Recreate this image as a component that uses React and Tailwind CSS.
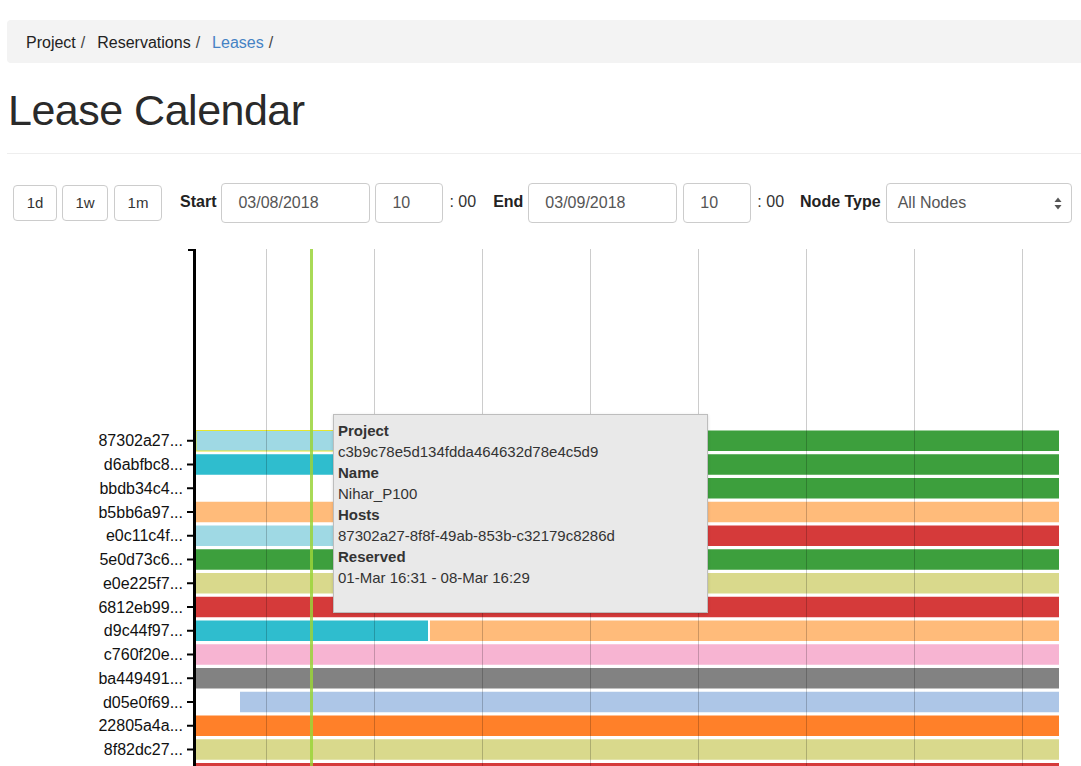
import React from "react";

const rows = [
  { id: "87302a27...", bars: [{ x1: 196, x2: 560, c: "#9fd9e4", hl: true }, { x1: 560, x2: 1059, c: "#3d9f3d" }] },
  { id: "d6abfbc8...", bars: [{ x1: 196, x2: 560, c: "#2fbdce" }, { x1: 560, x2: 1059, c: "#3d9f3d" }] },
  { id: "bbdb34c4...", bars: [{ x1: 560, x2: 1059, c: "#3d9f3d" }] },
  { id: "b5bb6a97...", bars: [{ x1: 196, x2: 1059, c: "#ffbb7a" }] },
  { id: "e0c11c4f...", bars: [{ x1: 196, x2: 560, c: "#9fd9e4" }, { x1: 560, x2: 1059, c: "#d53a3a" }] },
  { id: "5e0d73c6...", bars: [{ x1: 196, x2: 1059, c: "#3d9f3d" }] },
  { id: "e0e225f7...", bars: [{ x1: 196, x2: 1059, c: "#d9d98c" }] },
  { id: "6812eb99...", bars: [{ x1: 196, x2: 1059, c: "#d53a3a" }] },
  { id: "d9c44f97...", bars: [{ x1: 196, x2: 428, c: "#2fbdce" }, { x1: 430, x2: 1059, c: "#ffbb7a" }] },
  { id: "c760f20e...", bars: [{ x1: 196, x2: 1059, c: "#f7b4d2" }] },
  { id: "ba449491...", bars: [{ x1: 196, x2: 1059, c: "#828282" }] },
  { id: "d05e0f69...", bars: [{ x1: 240, x2: 1059, c: "#adc6e7" }] },
  { id: "22805a4a...", bars: [{ x1: 196, x2: 1059, c: "#ff8029" }] },
  { id: "8f82dc27...", bars: [{ x1: 196, x2: 1059, c: "#d9d98c" }] },
  // last row only peeks in at the bottom edge, its label is below the fold
  { id: "", bars: [{ x1: 196, x2: 1059, c: "#d53a3a" }] },
];

const gridXs = [266.5, 374.5, 482.5, 590.5, 698.5, 806.5, 914.5, 1022.5];

// chart svg starts at page y=240
const ROW_TOP = 190.5;
const STRIDE = 23.75;
const BAR_H = 20.5;

function Chart() {
  return (
    <div className="relative mt-[17px] h-[526px]">
      <svg width="1081" height="526" className="block">
        {rows.map((r, i) => {
          const y = ROW_TOP + STRIDE * i;
          return (
            <g key={i}>
              {r.bars.map((b, j) => (
                <rect
                  key={j}
                  x={b.x1}
                  y={y}
                  width={b.x2 - b.x1}
                  height={BAR_H}
                  fill={b.c}
                  stroke={b.hl ? "#e6e62e" : "none"}
                  strokeWidth={b.hl ? 1 : 0}
                />
              ))}
              {r.id && (
                <>
                  <line x1="187" x2="194" y1={y + BAR_H / 2} y2={y + BAR_H / 2} stroke="#000" strokeWidth="2" />
                  <text
                    x="183"
                    y={y + BAR_H / 2 + 5.5}
                    textAnchor="end"
                    fontSize="16"
                    fill="#111"
                    fontFamily="Liberation Sans, Arial, sans-serif"
                  >
                    {r.id}
                  </text>
                </>
              )}
            </g>
          );
        })}
        {gridXs.map((x) => (
          <line key={x} x1={x} x2={x} y1="9" y2="526" stroke="#000" strokeOpacity="0.2" strokeWidth="1" />
        ))}
        <line x1="311.5" x2="311.5" y1="9" y2="526" stroke="#9ad43a" strokeOpacity="0.85" strokeWidth="3" />
        <line x1="194.5" x2="194.5" y1="9" y2="526" stroke="#000" strokeWidth="3" />
        <line x1="188" x2="196" y1="10" y2="10" stroke="#000" strokeWidth="2" />
      </svg>

      {/* tooltip */}
      <div className="absolute left-[333px] top-[174px] w-[375px] h-[199px] bg-[#e9e9e9] border border-[#bdbdbd] shadow-[0_1px_3px_rgba(0,0,0,0.15)] px-[4px] pt-[5px] text-[15px] leading-[21px] text-[#333]">
        <div className="font-bold">Project</div>
        <div>c3b9c78e5d134fdda464632d78e4c5d9</div>
        <div className="font-bold">Name</div>
        <div>Nihar_P100</div>
        <div className="font-bold">Hosts</div>
        <div>87302a27-8f8f-49ab-853b-c32179c8286d</div>
        <div className="font-bold">Reserved</div>
        <div>01-Mar 16:31 - 08-Mar 16:29</div>
      </div>
    </div>
  );
}

function Controls() {
  const btn = "h-[36px] border border-[#ccc] rounded-[4px] bg-white text-[15px] text-[#333] flex items-center justify-center";
  const input = "h-[40px] border border-[#ccc] rounded-[4px] bg-white text-[16px] text-[#555] outline-none";
  return (
    <div className="flex items-center h-[40px] mt-[29px] pl-[13px]">
      <button className={`${btn} w-[44px]`}>1d</button>
      <button className={`${btn} w-[46px] ml-[5px]`}>1w</button>
      <button className={`${btn} w-[48px] ml-[6px]`}>1m</button>

      <span className="ml-[18px] font-bold text-[16px] text-[#222] -mt-[3px]">Start</span>
      <input readOnly value="03/08/2018" className={`${input} w-[149px] ml-[5px] pl-[16px]`} />
      <input readOnly value="10" className={`${input} w-[68px] ml-[5px] pl-[16px]`} />
      <span className="ml-[6px] text-[16px] text-[#333] -mt-[3px]">: 00</span>

      <span className="ml-[17px] font-bold text-[16px] text-[#222] -mt-[3px]">End</span>
      <input readOnly value="03/09/2018" className={`${input} w-[149px] ml-[5px] pl-[16px]`} />
      <input readOnly value="10" className={`${input} w-[68px] ml-[6px] pl-[16px]`} />
      <span className="ml-[6px] text-[16px] text-[#333] -mt-[3px]">: 00</span>

      <span className="ml-[16px] font-bold text-[16px] text-[#222] -mt-[3px]">Node Type</span>
      <div className={`${input} w-[186px] ml-[5px] pl-[11px] pr-[9px] flex items-center justify-between`}>
        <span>All Nodes</span>
        <svg width="8" height="13" viewBox="0 0 8 13">
          <path d="M4 0.5 L7.5 5 L0.5 5 Z" fill="#555" />
          <path d="M4 12.5 L7.5 8 L0.5 8 Z" fill="#555" />
        </svg>
      </div>
    </div>
  );
}

export default function App() {
  return (
    <div className="w-[1081px] h-[766px] overflow-hidden bg-white font-[Liberation_Sans,Arial,sans-serif] text-[#333]">
      <div className="pt-[20px]">
        <div className="ml-[7px] w-[1100px] h-[43px] bg-[#f3f3f3] rounded-[4px] flex items-center pl-[19px] pt-[2px] text-[16px] text-[#222]">
          <span>Project</span>
          <span className="ml-[5px] text-[#444]">/</span>
          <span className="ml-[12px]">Reservations</span>
          <span className="ml-[5px] text-[#444]">/</span>
          <span className="ml-[12px] text-[#4582c4]">Leases</span>
          <span className="ml-[5px] text-[#444]">/</span>
        </div>
      </div>

      <h1 className="ml-[8px] mt-[24px] text-[43px] leading-[47px] tracking-[-0.5px] font-medium text-[#2a2a2a]">
        Lease Calendar
      </h1>
      <div className="ml-[7px] mt-[19px] w-[1100px] h-px bg-[#eee]" />

      <Controls />
      <Chart />
    </div>
  );
}
